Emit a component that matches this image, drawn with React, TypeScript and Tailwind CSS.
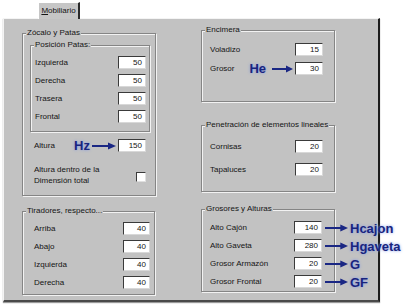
import type { ReactNode } from "react"

const FONT = "font-['Liberation_Sans',Arial,sans-serif]"

function Group({
  title,
  className,
  children,
}: {
  title: string
  className: string
  children?: ReactNode
}) {
  return (
    <div
      className={`relative border border-[#858585] shadow-[inset_1px_1px_0_#f2f2f2,1px_1px_0_#f2f2f2] ${className}`}
    >
      <span className="absolute -top-[6px] left-[3px] bg-[#c2c2c2] px-px text-[8px] leading-[10px]">
        {title}
      </span>
      {children}
    </div>
  )
}

function Field({ value, className = "w-[28px]" }: { value: string; className?: string }) {
  return (
    <div
      className={`h-[13px] shrink-0 border border-t-[#3a3a3a] border-l-[#3a3a3a] border-r-[#d8d8d8] border-b-[#d8d8d8] bg-white pr-[3px] text-right text-[8px] leading-[11px] ${className}`}
    >
      {value}
    </div>
  )
}

function Arrow({ className }: { className: string }) {
  return (
    <svg className={className} viewBox="0 0 24 8" preserveAspectRatio="none">
      <line x1="0" y1="4" x2="18" y2="4" stroke="#1a2784" strokeWidth="2" />
      <polygon points="16,0.5 24,4 16,7.5" fill="#1a2784" />
    </svg>
  )
}

function Tag({ children }: { children: ReactNode }) {
  return (
    <span className="text-[13px] font-bold leading-[14px] text-[#18247e] [text-shadow:0_0_3px_#7f95e6]">
      {children}
    </span>
  )
}

function Row({ label, value, className, fieldClass }: { label: string; value: string; className?: string; fieldClass?: string }) {
  return (
    <div className={`flex h-[13px] items-center justify-between ${className ?? ""}`}>
      <span className="text-[8px] leading-[10px]">{label}</span>
      <Field value={value} className={fieldClass} />
    </div>
  )
}

function NoteRow({ label, value, note }: { label: string; value: string; note: string }) {
  return (
    <div className="flex h-[13px] items-center justify-between">
      <span className="text-[8px] leading-[10px]">{label}</span>
      <div className="relative">
        <Field value={value} />
        <div className="absolute left-full top-1/2 ml-[3px] flex -translate-y-1/2 items-center whitespace-nowrap">
          <Arrow className="h-[8px] w-[23px]" />
          <span className="ml-[2px]">
            <Tag>{note}</Tag>
          </span>
        </div>
      </div>
    </div>
  )
}

export default function App() {
  return (
    <div className={`h-[306px] w-[408px] overflow-hidden bg-white text-[#141414] ${FONT}`}>
      <div className="flex pl-[38px] pt-[2px]">
        <div className="relative z-10 -mb-px flex h-[17px] w-[42px] items-center justify-center border-l border-t border-r-2 border-l-white border-t-white border-r-[#2a2a2a] bg-[#c6c6c6] text-[8px]">
          <span>
            <span className="underline">M</span>obiliario
          </span>
        </div>
      </div>

      <div className="ml-[3px] flex h-[284px] w-[377px] items-start border-t border-l border-r-2 border-b-2 border-t-[#f4f4f4] border-l-[#f4f4f4] border-r-[#1c1c1c] border-b-[#4a4a4a] bg-[#c2c2c2] pl-[18px] shadow-[0_1px_1px_#9a9a9a]">
        {/* left column */}
        <div className="mt-[14px] flex w-[134px] flex-col">
          <Group title="Zócalo y Patas" className="h-[163px] pl-[7px] pt-[11px]">
            <Group title="Posición Patas:" className="flex h-[87px] w-[120px] flex-col gap-[5px] pl-[4px] pr-[3px] pt-[10px]">
              <Row label="Izquierda" value="50" />
              <Row label="Derecha" value="50" />
              <Row label="Trasera" value="50" />
              <Row label="Frontal" value="50" />
            </Group>
            <div className="mt-[7px] flex h-[13px] w-[120px] items-center pl-[4px] pr-[4px]">
              <span className="text-[8px] leading-[10px]">Altura</span>
              <div className="ml-auto flex items-center">
                <Tag>Hz</Tag>
                <Arrow className="ml-[2px] h-[8px] w-[24px]" />
                <Field value="150" className="ml-[2px] w-[28px]" />
              </div>
            </div>
            <div className="mt-[12px] flex w-[120px] items-center pl-[4px] pr-[3px]">
              <span className="text-[8px] leading-[11px]">
                Altura dentro de la
                <br />
                Dimensión total
              </span>
              <div className="ml-auto mr-[1px] mt-[4px] h-[10px] w-[10px] border border-t-[#3a3a3a] border-l-[#3a3a3a] border-r-[#e0e0e0] border-b-[#e0e0e0] bg-white" />
            </div>
          </Group>

          <Group title="Tiradores, respecto..." className="mt-[15px] flex h-[84px] w-[133px] flex-col gap-[5px] pl-[11px] pr-[4px] pt-[10px]">
            <Row label="Arriba" value="40" fieldClass="w-[27px]" />
            <Row label="Abajo" value="40" fieldClass="w-[27px]" />
            <Row label="Izquierda" value="40" fieldClass="w-[27px]" />
            <Row label="Derecha" value="40" fieldClass="w-[27px]" />
          </Group>
        </div>

        {/* right column */}
        <div className="ml-[45px] mt-[11px] flex w-[134px] flex-col">
          <Group title="Encimera" className="flex h-[72px] flex-col gap-[6px] pl-[8px] pr-[11px] pt-[12px]">
            <Row label="Voladizo" value="15" />
            <div className="flex h-[13px] items-center">
              <span className="text-[8px] leading-[10px]">Grosor</span>
              <div className="ml-auto flex items-center">
                <Tag>He</Tag>
                <Arrow className="ml-[6px] h-[8px] w-[21px]" />
                <Field value="30" className="ml-[2px] w-[28px]" />
              </div>
            </div>
          </Group>

          <Group title="Penetración de elementos lineales" className="mt-[23px] flex h-[67px] flex-col gap-[10px] pl-[8px] pr-[11px] pt-[14px]">
            <Row label="Cornisas" value="20" />
            <Row label="Tapaluces" value="20" />
          </Group>

          <Group title="Grosores y Alturas" className="mt-[17px] flex h-[83px] flex-col gap-[5px] pl-[8px] pr-[12px] pt-[11px]">
            <NoteRow label="Alto Cajón" value="140" note="Hcajon" />
            <NoteRow label="Alto Gaveta" value="280" note="Hgaveta" />
            <NoteRow label="Grosor Armazón" value="20" note="G" />
            <NoteRow label="Grosor Frontal" value="20" note="GF" />
          </Group>
        </div>
      </div>
    </div>
  )
}
